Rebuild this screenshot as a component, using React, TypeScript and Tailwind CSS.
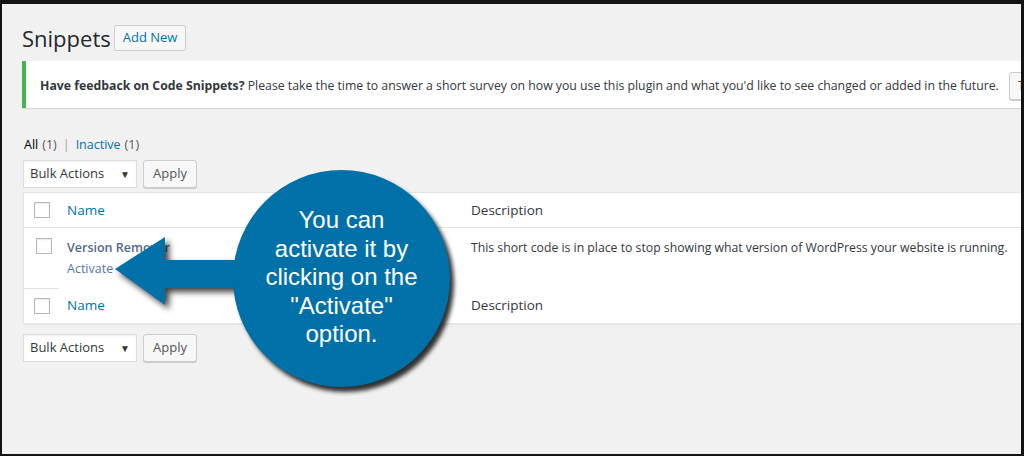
const Checkbox = () => (
  <span className="block w-4 h-4 bg-white border border-[#b4b9be] shadow-[inset_0_1px_2px_rgba(0,0,0,0.1)]" />
);

const BulkActions = () => (
  <div className="flex items-center gap-[6px]">
    <div className="flex items-center justify-between w-[114px] h-[28px] bg-white border border-[#ddd] shadow-[inset_0_1px_2px_rgba(0,0,0,0.07)] pl-[6px] pr-[6px] text-[13px] text-[#32373c]">
      <span>Bulk Actions</span>
      <span className="text-[10px] text-[#32373c]">▼</span>
    </div>
    <button className="h-[28px] px-[9px] bg-[#f7f7f7] border border-[#ccc] rounded-[3px] shadow-[0_1px_0_#ccc] text-[13px] text-[#555]">
      Apply
    </button>
  </div>
);

export default function App() {
  return (
    <div className="relative w-[1024px] h-[456px] overflow-hidden bg-[#f1f1f1] border-t-4 border-l-2 border-r-[3px] border-b-2 border-[#141414] font-['Open_Sans',sans-serif] text-[#23282d]">
      <div className="pl-[20px] pt-[21px]">
        {/* Title */}
        <div className="flex items-center gap-[3px] h-[26px]">
          <h1 className="text-[22px] leading-[26px] font-normal text-[#23282d]">Snippets</h1>
          <button className="h-[26px] px-[8px] bg-[#f7f7f7] border border-[#ccc] rounded-[2px] text-[13px] text-[#0073aa]">
            Add New
          </button>
        </div>

        {/* Notice */}
        <div className="mt-[10px] w-[1100px] h-[47px] flex items-center bg-white border-l-4 border-[#46b450] shadow-[0_1px_1px_rgba(0,0,0,0.1)] pl-[14px] pt-[3px] text-[12.27px] text-[#32373c]">
          <p className="shrink-0 w-[969px] whitespace-nowrap">
            <span className="font-bold">Have feedback on Code Snippets?</span> Please take the time to answer a short survey on
            how you use this plugin and what you'd like to see changed or added in the future.
          </p>
          <button className="shrink-0 h-[28px] px-[8px] bg-[#f7f7f7] border border-[#ccc] rounded-[3px] shadow-[0_1px_0_#ccc] text-[12px] text-[#555]">
            Take the survey now
          </button>
        </div>

        {/* Views */}
        <div className="mt-[27px] pl-[2px] h-[20px] flex items-center gap-[4px] text-[12.5px] text-[#555]">
          <span className="text-black">All</span>
          <span>(1)</span>
          <span className="text-[#a0a5aa] px-[2px]">|</span>
          <span className="text-[#0073aa]">Inactive</span>
          <span>(1)</span>
        </div>

        <div className="mt-[5px] pl-[1px]">
          <BulkActions />
        </div>

        {/* Table */}
        <div className="mt-[4px] ml-[1px] w-[1010px] bg-white border border-[#e5e5e5] shadow-[0_1px_1px_rgba(0,0,0,0.04)]">
          <div className="flex items-center h-[35px] border-b border-[#e1e1e1] text-[13.5px]">
            <div className="w-[43px] pl-[10px]">
              <Checkbox />
            </div>
            <div className="w-[404px] text-[#0073aa]">Name</div>
            <div className="text-[#32373c]">Description</div>
          </div>
          <div className="flex h-[60px]">
            <div className="w-[35px] pl-[12px] pt-[10px]">
              <Checkbox />
            </div>
            <div className="w-[412px] pl-[8px] pt-[9px] text-[12.5px] leading-[21px]">
              <div className="font-semibold text-[#51698a]">Version Remover</div>
              <div className="text-[#5577a0]">Activate</div>
            </div>
            <div className="pt-[9px] text-[12.25px] leading-[21px] text-[#32373c] whitespace-nowrap">
              This short code is in place to stop showing what version of WordPress your website is running.
            </div>
          </div>
          <div className="flex items-center h-[35px] text-[13.5px]">
            <div className="w-[35px] h-full border-t border-[#e1e1e1] flex items-center pl-[10px]">
              <Checkbox />
            </div>
            <div className="w-[412px] pl-[8px] text-[#0073aa]">Name</div>
            <div className="text-[#32373c]">Description</div>
          </div>
        </div>

        <div className="mt-[10px] pl-[1px]">
          <BulkActions />
        </div>
      </div>

      {/* Callout arrow */}
      <svg
        className="absolute left-[106px] top-[226px] drop-shadow-[4px_4px_3px_rgba(0,0,0,0.75)]"
        width="160"
        height="90"
        viewBox="0 0 160 90"
      >
        <polygon points="7,39 57,7 57,30 150,30 150,58 57,58 57,75" fill="#0071a8" />
      </svg>

      {/* Callout bubble */}
      <div className="absolute left-[231px] top-[166px] w-[217px] h-[217px] rounded-full bg-[#0071a8] shadow-[4px_5px_4px_rgba(0,0,0,0.8)] flex items-center justify-center">
        <p className="text-center text-white font-['Liberation_Sans',Arial,sans-serif] text-[24px] leading-[28.5px] pb-[2px]">
          You can
          <br />
          activate it by
          <br />
          clicking on the
          <br />
          "Activate"
          <br />
          option.
        </p>
      </div>
    </div>
  );
}
